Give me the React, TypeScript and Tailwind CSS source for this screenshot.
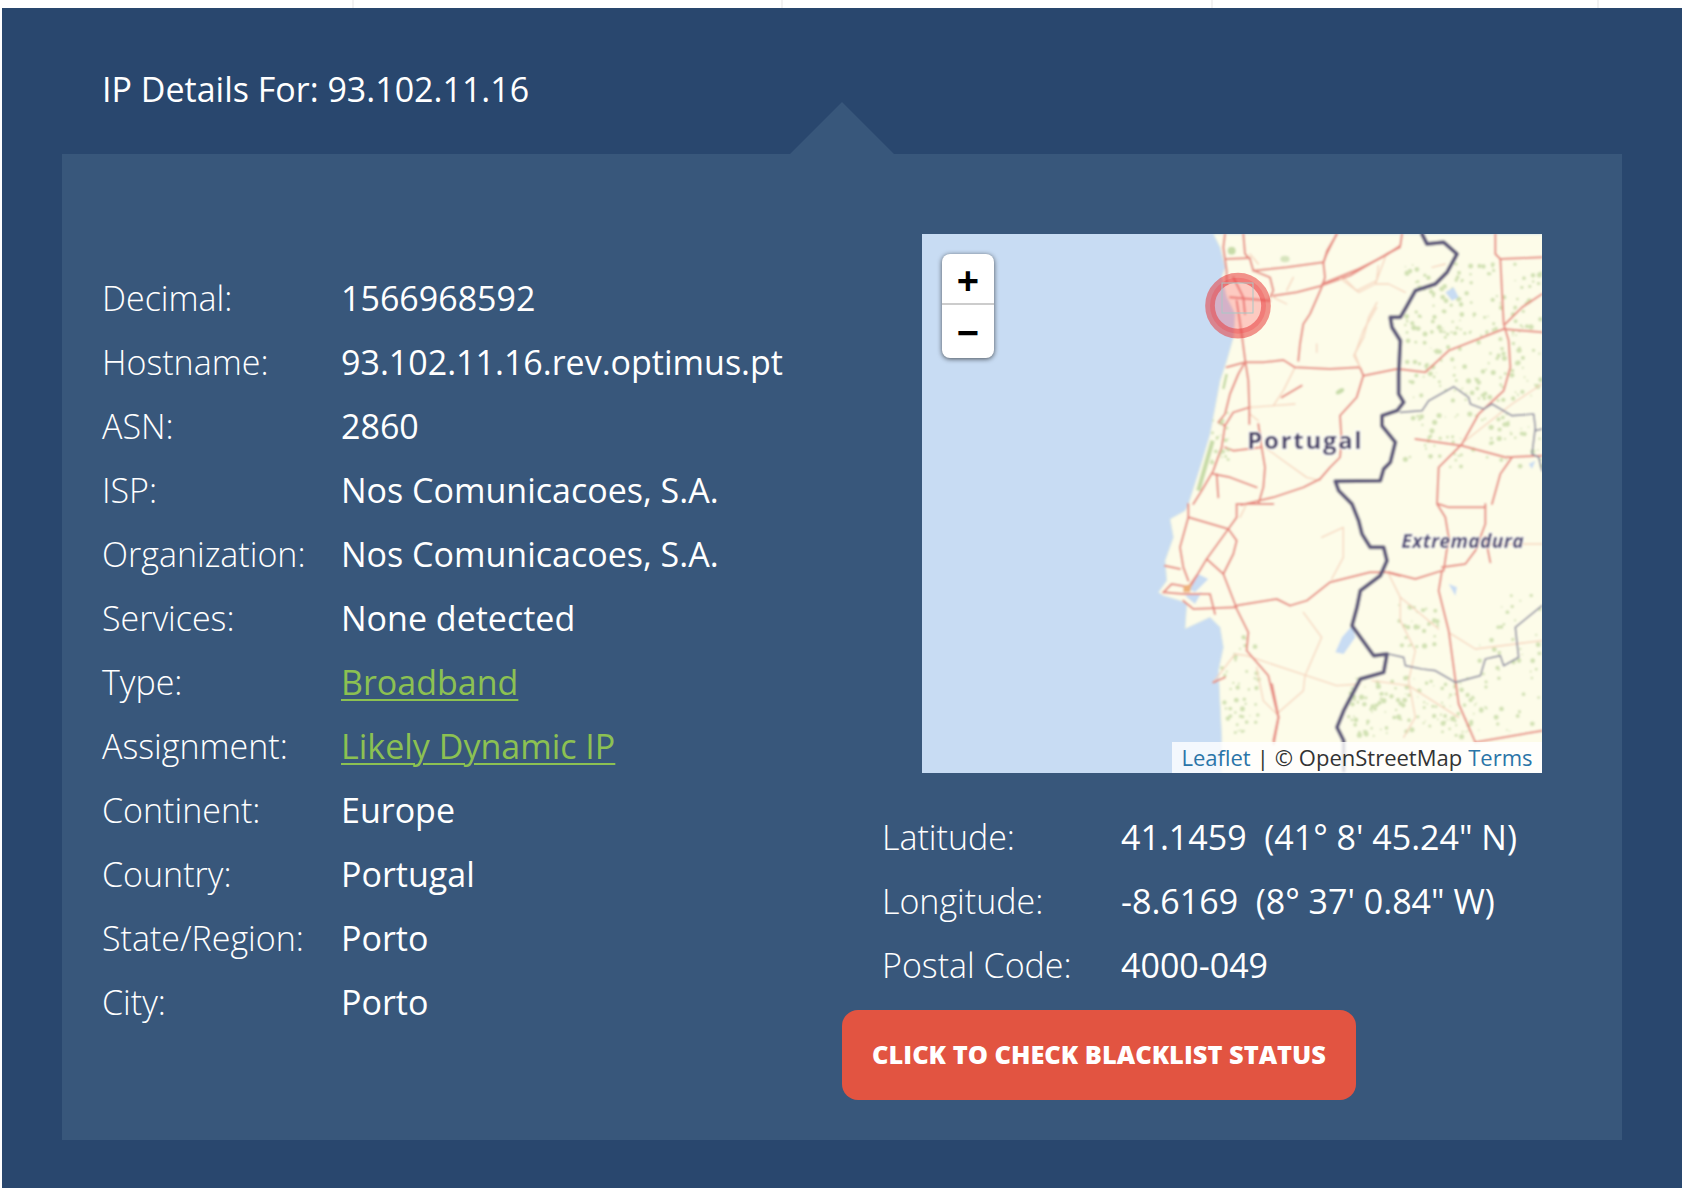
import React from "react";

const rows: [string, string, boolean?][] = [
  ["Decimal:", "1566968592"],
  ["Hostname:", "93.102.11.16.rev.optimus.pt"],
  ["ASN:", "2860"],
  ["ISP:", "Nos Comunicacoes, S.A."],
  ["Organization:", "Nos Comunicacoes, S.A."],
  ["Services:", "None detected"],
  ["Type:", "Broadband", true],
  ["Assignment:", "Likely Dynamic IP", true],
  ["Continent:", "Europe"],
  ["Country:", "Portugal"],
  ["State/Region:", "Porto"],
  ["City:", "Porto"],
];

const geo: [string, string][] = [
  ["Latitude:", "41.1459\u00a0\u00a0(41° 8' 45.24\" N)"],
  ["Longitude:", "-8.6169\u00a0\u00a0(8° 37' 0.84\" W)"],
  ["Postal Code:", "4000-049"],
];

// Map paths, in 3x units of four overlapping crops
const LAND =
  "M250,0 L270,40 L285,100 L275,130 L290,190 L315,240 L310,310 L290,380 L270,440 L255,520 L240,600 L210,700 L175,810 L165,830 L120,855 L130,910 L105,980 L110,1040 L85,1075 L100,1085 L150,1100 L170,1110 L165,1185 L240,1150 L270,1180 L280,1240 L265,1310 L270,1410 L275,1510 L275,1620 L1300,1620 L1300,0 Z";

const majorA = [
  "M285,0 L280,40 L290,110 L290,150",
  "M340,0 L345,60 L360,75 L370,110 L420,130 L430,170 L420,190",
  "M290,75 L360,72",
  "M370,110 L470,100 L580,85 L590,60 L620,0",
  "M580,85 L585,130 L575,160 L540,240 L520,270 L510,330 L505,380",
  "M430,185 L500,175 L575,155 L660,125 L770,60 L810,40",
  "M300,190 L420,200",
  "M310,130 L340,190 L345,240",
  "M320,200 L335,300 L345,375 L355,440 L358,520 L358,570",
  "M290,400 L345,385 L400,385 L460,378 L495,400 L600,405 L690,400 L700,425 L800,405",
  "M700,425 L680,490 L630,545 L635,620 L630,670 L600,700 L570,735 L520,760 L430,790 L333,813",
  "M345,385 L325,420 L300,480 L285,540 L265,565 L285,575 L310,535 L358,520",
  "M285,575 L275,640 L250,710 L215,770 L190,810",
  "M385,570 L395,640 L405,700 L400,760 L385,810",
  "M285,640 L310,650 L395,640",
  "M515,455 L455,490",
  "M250,720 L300,730 L380,760",
  "M260,720 L265,790",
];
const minorA = [
  "M360,60 L385,90",
  "M490,130 L470,170",
  "M740,220 L700,290 L675,360 L690,400",
  "M495,400 L460,470 L430,515 L495,510",
  "M360,520 L430,515",
  "M405,640 L460,680 L530,730 L570,740",
  "M640,130 L680,170 L740,140 L745,95",
  "M560,330 L560,355",
  "M360,540 L385,560",
  "M430,190 L470,210",
];
const majorB = [
  "M150,150 L260,105 L340,65 L385,35 L390,0",
  "M155,85 L165,50 L195,0",
  "M380,405 L460,415 L530,350 L695,285 L810,295",
  "M670,0 L670,60 L685,75 L810,70",
  "M685,75 L695,270 L710,320 L715,400 L695,470 L620,540 L570,630 L500,700 L495,810",
  "M700,270 L750,220 L810,180",
  "M430,615 L570,635 L700,670 L810,665",
  "M720,670 L685,720 L660,810",
];
const minorB = [
  "M200,130 L260,175 L310,150 L350,150 L400,175",
  "M310,150 L340,70",
  "M315,205 L290,250 L275,310 L245,365 L265,400",
  "M810,450 L720,510 L580,620",
  "M480,100 L520,90",
];
const majorC = [
  "M175,0 L175,40 L150,130 L160,190 L175,230",
  "M175,40 L295,75 L320,110 L310,150 L280,210 L315,300",
  "M320,0 L320,40 L295,75 L230,165 L200,215 L175,250",
  "M230,165 L280,210",
  "M105,185 L150,195",
  "M320,0 L430,0",
  "M100,265 L125,240 L180,250 L200,215",
  "M100,265 L160,270 L240,270",
  "M160,290 L190,315 L320,310",
  "M240,270 L255,330",
  "M315,305 L440,285 L480,305 L530,290 L600,235 L720,205 L770,205 L810,215",
  "M315,305 L355,385 L350,440 L415,515 L435,600 L445,640 L430,710",
  "M250,535 L285,520",
];
const minorC = [
  "M350,455 L530,515 L620,545 L690,540",
  "M520,325 L575,400 L525,515 L520,560 L440,630",
  "M380,490 L400,590 L440,630",
  "M250,535 L315,450 L350,455",
  "M575,100 L640,70 L640,160 L605,225",
  "M330,40 L350,0",
];
const majorD = [
  "M515,200 L530,100 L520,40 L495,0",
  "M510,190 L580,180 L610,140 L640,60 L640,0",
  "M640,100 L655,175",
  "M500,0 L530,10 L640,10",
  "M350,205 L430,225 L510,200",
  "M510,200 L500,260 L530,380 L560,600 L610,715",
  "M610,715 L810,680",
  "M0,540 L20,640 L5,720",
];
const minorD = [
  "M350,210 L385,280 L500,375",
  "M385,280 L385,350 L430,440 L410,530 L430,640 L395,700",
  "M530,385 L610,435 L730,420 L810,410",
  "M300,530 L410,545 L560,640",
  "M640,120 L810,120",
];
const borderMain = [
  "M450,0 L465,30 L515,25 L555,60 L525,115 L490,150 L430,170 L405,215 L385,250 L355,250 L360,280 L385,320 L380,420 L380,480 L395,505 L375,530 L330,545 L330,575 L370,625 L355,685 L335,705 L325,740 L190,742 L200,770 L240,810 L260,860 L270,900 L295,940 L335,940 L345,980 L325,1025 L265,1070 L255,1120 L240,1175 L305,1265 L345,1260 L335,1315 L265,1335 L215,1430 L195,1480 L215,1520 L215,1610",
];
const borderRegional = [
  "M385,535 L450,530 L470,500 L545,458 L590,490 L595,510 L635,525 L660,510 L720,545 L785,540 L790,580 L780,660 L800,670 L810,710",
  "M350,1260 L395,1270 L400,1295 L450,1305 L490,1310 L550,1345 L625,1325 L640,1275 L685,1265 L695,1295 L740,1270 L730,1180 L810,1115",
  "M790,590 L810,585",
];
const lakes = [
  "M240,1175 L250,1210 L215,1260 L190,1255 L210,1210 Z",
  "M520,175 L545,160 L560,190 L540,200 Z",
  "M530,1050 L555,1060 L550,1085 Z",
  "M770,690 L790,680 L780,705 Z",
];

// Deterministic speckle for the green tile texture
function speckle(seed: number, n: number, x0: number, y0: number, x1: number, y1: number) {
  const out: [number, number, number][] = [];
  let s = seed;
  const next = () => {
    s = (s * 16807) % 2147483647;
    return s / 2147483647;
  };
  for (let i = 0; i < n; i++) {
    out.push([x0 + next() * (x1 - x0), y0 + next() * (y1 - y0), 2 + next() * 6]);
  }
  return out;
}
const greens = [
  ...speckle(11, 170, 400, 90, 700, 500),
  ...speckle(29, 50, 720, 90, 810, 500),
  ...speckle(37, 70, 400, 520, 810, 700),
  ...speckle(43, 130, 230, 1330, 620, 1510),
  ...speckle(53, 50, 620, 1080, 810, 1500),
  ...speckle(61, 30, 380, 1110, 500, 1240),
];
const greensLeft = [
  ...speckle(71, 45, -150, 1200, -40, 1500),
  ...speckle(83, 20, -180, 520, -130, 700),
];

function Road({ d, w, c }: { d: string; w: number; c: string }) {
  return <path d={d} fill="none" stroke={c} strokeWidth={w} strokeLinejoin="round" strokeLinecap="round" />;
}

function MapArt() {
  const major = "#e78d83";
  const minor = "#f6d5bf";
  return (
    <svg viewBox="0 0 1860 1617" width="620" height="539" className="block">
      <defs>
        <filter id="soft" x="-5%" y="-5%" width="110%" height="110%">
          <feGaussianBlur stdDeviation="2.4" />
        </filter>
      </defs>
      <g filter="url(#soft)">
        <g transform="translate(624,0)">
          <path d={LAND} fill="#fdfce9" stroke="#dbe7e6" strokeWidth="3" />
          <path d="M248,620 L205,770" stroke="#c7dba8" strokeWidth="13" fill="none" />
          <path d="M290,420 L280,465" stroke="#c7dba8" strokeWidth="8" fill="none" />
          <ellipse cx="630" cy="472" rx="14" ry="7" fill="#c7dba8" transform="rotate(-30 630 472)" />
          <ellipse cx="305" cy="50" rx="12" ry="12" fill="#c7dba8" />
          <ellipse cx="465" cy="75" rx="14" ry="10" fill="#d7e4bd" />
          <path d="M205,1020 L235,1035 L195,1075 L175,1065 Z" fill="#c8dcf3" />
          <path d="M165,1085 L215,1075 L195,1110 Z" fill="#c8dcf3" />
          {minorA.map((d) => <Road key={d} d={d} w={4} c={minor} />)}
          {majorA.map((d) => <Road key={d} d={d} w={6} c={major} />)}
        </g>
        <g transform="translate(1050,0)">
          <g opacity="0.75">
            {greens.map(([x, y, r], i) => <circle key={i} cx={x} cy={y} r={r} fill="#c3d8a2" />)}
            {greensLeft.map(([x, y, r], i) => <circle key={i} cx={x} cy={y} r={r} fill="#c3d8a2" />)}
          </g>
          {lakes.map((d) => <path key={d} d={d} fill="#c8dcf3" />)}
          {minorB.map((d) => <Road key={d} d={d} w={4} c={minor} />)}
          {majorB.map((d) => <Road key={d} d={d} w={6} c={major} />)}
        </g>
        <g transform="translate(624,810)">
          {minorC.map((d) => <Road key={d} d={d} w={4} c={minor} />)}
          {majorC.map((d) => <Road key={d} d={d} w={6} c={major} />)}
          <path d="M160,245 L185,240 L180,265 L160,265 Z" fill="#eeb27c" />
        </g>
        <g transform="translate(1050,810)">
          {minorD.map((d) => <Road key={d} d={d} w={4} c={minor} />)}
          {majorD.map((d) => <Road key={d} d={d} w={6} c={major} />)}
        </g>
        <g transform="translate(1050,0)">
          {borderRegional.map((d) => <Road key={d} d={d} w={5} c="#8f8fa3" />)}
          {borderMain.map((d) => <Road key={d} d={d} w={12} c="#5e5a7c" />)}
        </g>
      </g>
      <g filter="url(#soft)" fontFamily="'Open Sans', sans-serif" fontWeight="700">
        <g transform="translate(624,0)">
          <text
            x="352"
            y="646"
            fontSize="72"
            textLength="343"
            fill="#463f66"
            stroke="#ffffff"
            strokeOpacity="0.8"
            strokeWidth="8"
            style={{ paintOrder: "stroke" }}
          >
            Portugal
          </text>
        </g>
        <g transform="translate(1050,810)">
          <text
            x="388"
            y="133"
            fontSize="58"
            fontStyle="italic"
            textLength="367"
            fill="#4e4873"
            stroke="#ffffff"
            strokeOpacity="0.7"
            strokeWidth="6"
            style={{ paintOrder: "stroke" }}
          >
            Extremadura
          </text>
        </g>
      </g>
      <g transform="translate(948,215)">
        <circle cx="0" cy="0" r="84" fill="#ff1a33" fillOpacity="0.22" stroke="#e83c3c" strokeOpacity="0.55" strokeWidth="29" />
        <rect x="-48" y="-68" width="93" height="90" fill="none" stroke="#a9c8c6" strokeWidth="3" />
      </g>
    </svg>
  );
}

export default function App() {
  return (
    <div className="flex h-[1188px] w-[1682px] flex-col overflow-hidden bg-white font-['Open_Sans',sans-serif] text-[34px] text-white">
      <div className="flex h-2 shrink-0">
        <div className="w-[354px] border-r-2 border-[#f2f2f2]" />
        <div className="w-[429px] border-r-2 border-[#f2f2f2]" />
        <div className="w-[430px] border-r-2 border-[#f2f2f2]" />
        <div className="w-[386px] border-r-2 border-[#f2f2f2]" />
      </div>
      <div className="ml-[2px] flex flex-1 flex-col bg-[#29476e] pl-[60px] pr-[60px]">
        <div className="flex h-[146px] shrink-0 items-start pl-10 pt-[59px]">
          <h1 className="text-[34px] font-normal leading-[44px]">IP Details For: 93.102.11.16</h1>
        </div>
        <div className="relative flex h-[986px] w-[1560px] shrink-0 bg-[#38577b]">
          <div className="absolute left-[728px] top-[-52px] h-[52px] w-[104px] bg-[#38577b] [clip-path:polygon(50%_0,100%_100%,0_100%)]" />
          <div className="w-[780px] shrink-0 pl-10 pt-[112px]">
            {rows.map(([k, v, link]) => (
              <div key={k} className="flex h-16 items-center leading-none">
                <div className="w-[239px] shrink-0 font-light">{k}</div>
                {link ? (
                  <a className="text-[#8cc152] underline decoration-2 underline-offset-[4px]">{v}</a>
                ) : (
                  <div>{v}</div>
                )}
              </div>
            ))}
          </div>
          <div className="flex flex-col items-start pt-20">
            <div className="relative ml-20 h-[539px] w-[620px] overflow-hidden bg-[#c8dcf3]">
              <MapArt />
              <div className="absolute left-5 top-5 flex h-[104px] w-[52px] flex-col rounded-lg bg-white text-black shadow-[0_1px_5px_rgba(0,0,0,0.65)]">
                <div className="flex h-[51px] items-center justify-center border-b-2 border-[#cccccc] pt-[10px] font-['Liberation_Mono',monospace] text-[38px] font-bold leading-none">
                  +
                </div>
                <div className="flex flex-1 items-center justify-center pt-2 font-['Liberation_Mono',monospace] text-[38px] font-bold leading-none">
                  −
                </div>
              </div>
              <div className="absolute bottom-0 right-0 flex h-[31px] w-[370px] items-center justify-center gap-[6px] bg-white/80 pb-[2px] text-[22px] leading-none text-[#333333]">
                <a className="text-[#2b75a8]">Leaflet</a>
                <span>|</span>
                <span>© OpenStreetMap</span>
                <a className="text-[#2b75a8]">Terms</a>
              </div>
            </div>
            <div className="ml-10 mt-8">
              {geo.map(([k, v]) => (
                <div key={k} className="flex h-16 items-center leading-none">
                  <div className="w-[239px] shrink-0 font-light">{k}</div>
                  <div>{v}</div>
                </div>
              ))}
            </div>
            <button className="mt-[13px] flex h-[90px] w-[514px] items-center justify-center rounded-2xl bg-[#e25441] text-[25.4px] font-extrabold uppercase leading-none">
              Click to check blacklist status
            </button>
          </div>
        </div>
      </div>
    </div>
  );
}
